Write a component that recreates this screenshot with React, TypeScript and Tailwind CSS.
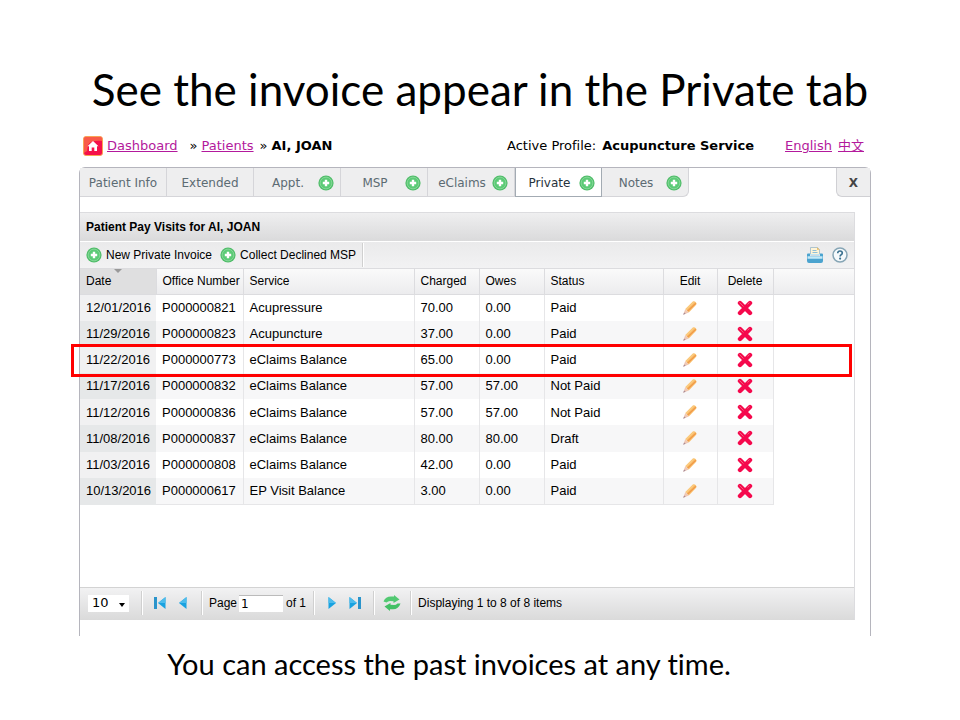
import React from "react";

type Visit = {
  date: string;
  office: string;
  service: string;
  charged: string;
  owes: string;
  status: string;
};

const VISITS: Visit[] = [
  { date: "12/01/2016", office: "P000000821", service: "Acupressure", charged: "70.00", owes: "0.00", status: "Paid" },
  { date: "11/29/2016", office: "P000000823", service: "Acupuncture", charged: "37.00", owes: "0.00", status: "Paid" },
  { date: "11/22/2016", office: "P000000773", service: "eClaims Balance", charged: "65.00", owes: "0.00", status: "Paid" },
  { date: "11/17/2016", office: "P000000832", service: "eClaims Balance", charged: "57.00", owes: "57.00", status: "Not Paid" },
  { date: "11/12/2016", office: "P000000836", service: "eClaims Balance", charged: "57.00", owes: "57.00", status: "Not Paid" },
  { date: "11/08/2016", office: "P000000837", service: "eClaims Balance", charged: "80.00", owes: "80.00", status: "Draft" },
  { date: "11/03/2016", office: "P000000808", service: "eClaims Balance", charged: "42.00", owes: "0.00", status: "Paid" },
  { date: "10/13/2016", office: "P000000617", service: "EP Visit Balance", charged: "3.00", owes: "0.00", status: "Paid" },
];

const TABS = [
  { label: "Patient Info", add: false },
  { label: "Extended", add: false },
  { label: "Appt.", add: true },
  { label: "MSP", add: true },
  { label: "eClaims", add: true },
  { label: "Private", add: true },
  { label: "Notes", add: true },
];

const COLUMNS = [
  { label: "Date", width: "w-[76px]" },
  { label: "Office Number", width: "w-[87px]" },
  { label: "Service", width: "w-[171px]" },
  { label: "Charged", width: "w-[65px]" },
  { label: "Owes", width: "w-[65px]" },
  { label: "Status", width: "w-[119px]" },
  { label: "Edit", width: "w-[54px]" },
  { label: "Delete", width: "w-[56px]" },
];

function PlusIcon() {
  return (
    <svg className="size-4 shrink-0" viewBox="0 0 16 16" aria-hidden="true">
      <circle cx="8" cy="8" r="7.6" fill="#4fbd69" />
      <circle cx="8" cy="8" r="5.9" fill="#5bcb76" stroke="#93dba3" strokeWidth="0.8" />
      <path d="M8 4.800v6.400M4.800 8h6.400" stroke="#fff" strokeWidth="2.400" />
    </svg>
  );
}

function HomeIcon() {
  return (
    <svg className="h-5 w-5 shrink-0" viewBox="0 0 20 20" aria-hidden="true">
      <rect x="0.5" y="0.5" width="19" height="19" rx="2.5" fill="#f5104a" stroke="#f9a455" />
      <path d="M1 2.5Q1 1 2.500 1h15Q19 1 19 2.500V5Q8 4 5 9L4 15 1 17z" fill="#fb7a48" opacity="0.7" />
      <path d="M10 5l5.500 5.200H14V15h-2.700v-3.500H8.700V15H6v-4.800H4.500z" fill="#fff" />
    </svg>
  );
}

function PencilIcon() {
  return (
    <svg className="mx-auto h-4 w-4" viewBox="0 0 16 16" aria-hidden="true">
      <path d="M3.300 9L10.800 1.500Q12 0.700 13.600 1.900 15.200 3.400 14.200 4.800L6.800 12.400z" fill="#fac06c" />
      <path d="M5.500 11.200L13.800 3.200" stroke="#f0994a" strokeWidth="1.300" />
      <path d="M4 9.600L11.800 1.900" stroke="#fbd596" strokeWidth="0.800" />
      <path d="M3.300 9L6.800 12.400 1.200 14.800z" fill="#efc8b4" />
      <path d="M1.200 14.800l0.900-2.300 1.600 1.300z" fill="#a58a98" />
    </svg>
  );
}

function DeleteIcon() {
  return (
    <svg className="mx-auto h-4 w-4" viewBox="0 0 16 16" aria-hidden="true">
      <path d="M3 3l10 10M13 3L3 13" stroke="#f5084c" strokeWidth="4.400" strokeLinecap="round" />
      <path d="M2.500 2.500l4 4M12.500 2.500l-2 2" stroke="#f0607a" strokeWidth="1" />
    </svg>
  );
}

function PrinterIcon() {
  return (
    <svg className="h-[18px] w-[18px]" viewBox="0 0 18 18" aria-hidden="true">
      <path d="M4.500 1.500h7l2 2V9h-9z" fill="#fff4d6" stroke="#9cb9c9" strokeWidth="0.8" />
      <path d="M11 1.200l2.800 2.600H11z" fill="#e9bd66" />
      <path d="M6.500 4.500h4M6.500 6.500h5" stroke="#8ebfd8" />
      <path d="M2 7.500h2v2.500h10V7.500h2q1 0 1 1V15q0 2-2 2H3q-2 0-2-2V8.500q0-1 1-1z" fill="#4ba3cf" />
      <path d="M1.500 11.500h15" stroke="#c3e9f7" strokeWidth="2.500" />
      <path d="M4 8.500h10" stroke="#bfe4f4" />
    </svg>
  );
}

function HelpIcon() {
  return (
    <svg className="h-4 w-4" viewBox="0 0 16 16" aria-hidden="true">
      <circle cx="8" cy="8" r="7" fill="#f6fafc" stroke="#86a5b5" strokeWidth="1.500" />
      <path d="M5.700 6.200Q5.800 4 8 4t2.300 1.900Q10.300 7 9.200 7.700 8.100 8.300 8.100 9.600" fill="none" stroke="#3a708f" strokeWidth="1.600" />
      <circle cx="8.100" cy="11.600" r="1.100" fill="#3a708f" />
    </svg>
  );
}

function ArrowIcon({ bar, flip }: { bar?: boolean; flip?: boolean }) {
  return (
    <svg className={flip ? "h-3 w-3 -scale-x-100" : "h-3 w-3"} viewBox="0 0 12 12" aria-hidden="true">
      {bar && <rect x="0" y="0" width="3" height="12" fill="#2a94cb" />}
      <path d={bar ? "M11.500 0v12L4 6z" : "M9.500 0v12L2 6z"} fill="#18a2e0" />
      <path d={bar ? "M11.500 0v6H4z" : "M9.500 0v6H2z"} fill="#4dbcec" />
    </svg>
  );
}

function RefreshIcon() {
  return (
    <svg className="h-4 w-[18px]" viewBox="0 0 18 16" aria-hidden="true">
      <path d="M0.500 6.500Q2.500 1.500 8 1.500h3V0l5.500 4.500L10.500 8V6.200L7 6Q5 6 3.500 7.500z" fill="#52c972" />
      <path d="M17.500 8.500Q15.500 14.300 10 14.300H7V16L1.500 11.500 7.500 8v1.800l3.500 0.200q2 0 3.500-1.500z" fill="#43c065" />
    </svg>
  );
}

function Separator() {
  return <div className="h-6 w-[2px] border-l border-[#d0d0d0] bg-white" />;
}

function Breadcrumbs() {
  return (
    <div className="flex h-[22px] items-center justify-between pl-1 pr-[7px] text-[13px] text-black">
      <nav className="flex items-center">
        <HomeIcon />
        <a href="#" className="ml-1 text-[#b3199c] underline">Dashboard</a>
        <span className="ml-3">»</span>
        <a href="#" className="ml-1 text-[#b3199c] underline">Patients</a>
        <span className="ml-[6px]">»</span>
        <b className="ml-1">AI, JOAN</b>
      </nav>
      <div className="flex">
        <span>Active Profile:</span>
        <b className="ml-[6px]">Acupuncture Service</b>
        <a href="#" className="ml-[31px] text-[#b3199c] underline">English</a>
        <a href="#" className="ml-[6px] text-[#b3199c] underline">中文</a>
      </div>
    </div>
  );
}

function TabBar() {
  return (
    <div className="flex h-[29px] text-xs text-[#5c6b73]">
      {TABS.map((tab) => {
        const active = tab.label === "Private";
        return (
          <button
            key={tab.label}
            className={`flex w-[87px] items-center border-r border-b pt-px ${
              tab.add ? "pr-[6px] pl-1" : "justify-center"
            } ${active ? "border-l border-[#a3abb3] bg-white text-[#26323c]" : "border-[#d5d5d9] bg-[#eeeeef]"} ${
              tab.label === "Notes" ? "rounded-br-md" : ""
            }`}
          >
            <span className={tab.add ? "flex-1 text-center" : ""}>{tab.label}</span>
            {tab.add && <PlusIcon />}
          </button>
        );
      })}
      <button className="ml-auto w-[34px] rounded-bl-md border-b border-l border-[#d0d0d4] bg-[#eeeeef] pt-px font-bold text-[#444]">
        X
      </button>
    </div>
  );
}

function VisitTable() {
  return (
    <div className="relative">
      <table className="h-[236px] w-full table-fixed border-collapse text-left">
        <thead>
          <tr className="h-[25px] bg-linear-to-b from-[#fafafa] to-[#ececee] text-xs">
            {COLUMNS.map((col, i) => (
              <th
                key={col.label}
                className={`${col.width} relative border-r border-b border-[#dcdcdf] p-0 font-normal whitespace-nowrap ${
                  i > 5 ? "text-center" : "pl-[6px]"
                } ${i === 0 ? "bg-[#dfdfe0]" : ""}`}
              >
                {i === 0 && (
                  <span className="absolute top-0 left-[34px] border-x-4 border-t-4 border-x-transparent border-t-[#999]" />
                )}
                {col.label}
              </th>
            ))}
            <th className="border-b border-[#dcdcdf]" />
          </tr>
        </thead>
        <tbody className="text-[13px]">
          {VISITS.map((v, row) => {
            const cell = `border-r border-[#e6e6e8] p-0 pl-[6px] whitespace-nowrap ${row % 2 ? "bg-[#f7f7f8]" : "bg-white"} ${
              row === VISITS.length - 1 ? "border-b" : ""
            }`;
            return (
              <tr key={v.office}>
                <td className={`p-0 pl-[6px] whitespace-nowrap ${row % 2 ? "bg-[#e6e8e9]" : "bg-[#f1f1f2]"}`}>{v.date}</td>
                <td className={cell}>{v.office}</td>
                <td className={cell}>{v.service}</td>
                <td className={cell}>{v.charged}</td>
                <td className={cell}>{v.owes}</td>
                <td className={cell}>{v.status}</td>
                <td className={cell}>
                  <button className="block w-full pr-[6px]" aria-label={`Edit ${v.office}`}><PencilIcon /></button>
                </td>
                <td className={cell}>
                  <button className="block w-full pr-[6px]" aria-label={`Delete ${v.office}`}><DeleteIcon /></button>
                </td>
                <td />
              </tr>
            );
          })}
        </tbody>
      </table>
      {/* callout around the new invoice */}
      <div className="pointer-events-none absolute top-[75px] right-[2px] -left-[9px] h-[33px] border-3 border-[#ff0000]" />
    </div>
  );
}

function Pager() {
  return (
    <div className="flex h-[33px] items-center border-t border-[#d3d3d3] bg-linear-to-b from-[#f2f2f3] to-[#dadada] pb-[2px] text-xs">
      <div className="relative ml-2">
        <select aria-label="Items per page" defaultValue="10" className="h-[17px] w-[41px] appearance-none bg-white pl-1 font-['DejaVu_Sans',sans-serif] text-[13px] leading-4">
          <option>10</option>
        </select>
        <span className="pointer-events-none absolute top-[8px] right-1 border-x-3 border-t-4 border-x-transparent border-t-black" />
      </div>
      <div className="ml-3"><Separator /></div>
      <button className="ml-[11px]" aria-label="First page"><ArrowIcon bar /></button>
      <button className="ml-[11px]" aria-label="Previous page"><ArrowIcon /></button>
      <div className="ml-3"><Separator /></div>
      <label htmlFor="page" className="ml-[6px]">Page</label>
      <input id="page" defaultValue="1" className="ml-[2px] h-[17px] w-11 border-t border-[#bbb] bg-white pl-[2px] font-['DejaVu_Sans',sans-serif] text-xs" />
      <span className="ml-[3px]">of 1</span>
      <div className="ml-[7px]"><Separator /></div>
      <button className="ml-[11px]" aria-label="Next page"><ArrowIcon flip /></button>
      <button className="ml-[11px]" aria-label="Last page"><ArrowIcon bar flip /></button>
      <div className="ml-3"><Separator /></div>
      <button className="ml-2" aria-label="Refresh"><RefreshIcon /></button>
      <div className="ml-[9px]"><Separator /></div>
      <span className="ml-[6px]">Displaying 1 to 8 of 8 items</span>
    </div>
  );
}

export default function App() {
  return (
    <main className="min-h-screen bg-white text-black [font-variant-ligatures:none]">
      <h1 className="pt-[61px] text-center font-['Lato','Carlito',sans-serif] text-[44px] leading-[56px]">
        See the invoice appear in the Private tab
      </h1>
      <div className="mr-[89px] ml-[79px] pt-[18px] font-['DejaVu_Sans','Noto_Sans_CJK_SC',sans-serif]">
        <Breadcrumbs />
        <div className="mt-[10px] h-[469px] rounded-t-md border border-b-0 border-[#b5b5bd]">
          <TabBar />
          <section className="mt-[15px] mr-[15px] border-r border-[#dcdcdf] font-['Liberation_Sans',sans-serif]">
            <h2 className="h-[29px] border-t border-[#dcdcdf] bg-linear-to-b from-[#efeff0] to-[#dadadb] pl-[6px] text-xs leading-7 font-bold">
              Patient Pay Visits for AI, JOAN
            </h2>
            <div className="flex h-7 items-center border-t border-b border-t-white border-b-[#dcdcdf] bg-linear-to-b from-[#eaeaeb] to-[#f2f2f3] pl-[6px] text-xs">
              <button className="flex items-center gap-1"><PlusIcon />New Private Invoice</button>
              <button className="ml-2 flex items-center gap-1"><PlusIcon />Collect Declined MSP</button>
              <div className="ml-[6px]"><Separator /></div>
              <button className="ml-auto" aria-label="Print"><PrinterIcon /></button>
              <button className="mr-[6px] ml-2" aria-label="Help"><HelpIcon /></button>
            </div>
            <div className="h-[318px]">
              <VisitTable />
            </div>
            <Pager />
          </section>
        </div>
      </div>
      <p className="pt-[7px] pr-[62px] text-center font-['Lato','Carlito',sans-serif] text-[29px] leading-[42px]">
        You can access the past invoices at any time.
      </p>
    </main>
  );
}
